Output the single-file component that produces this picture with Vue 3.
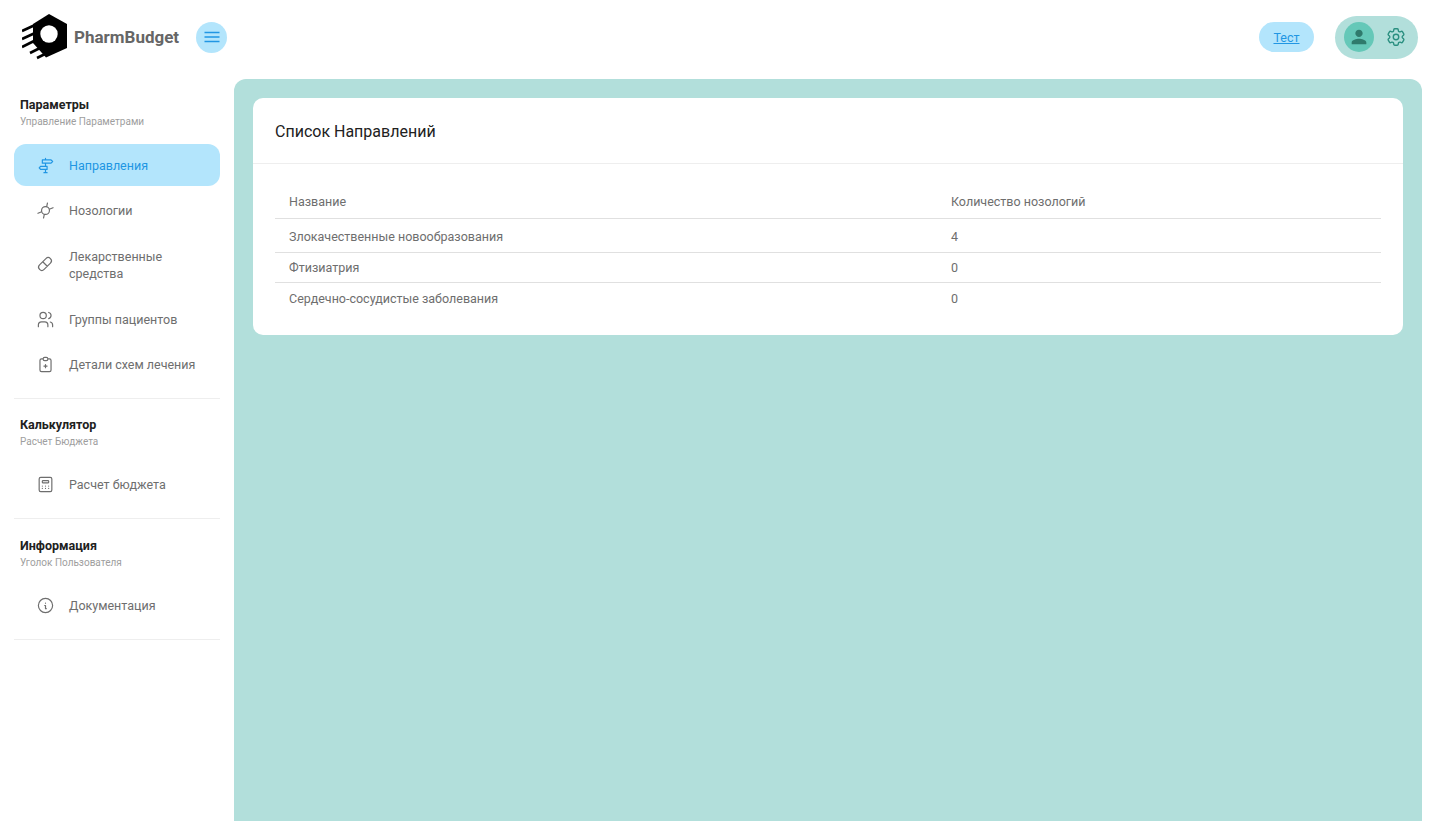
<script setup>
const groups = [
  {
    title: 'Параметры',
    sub: 'Управление Параметрами',
    items: [
      { label: 'Направления', icon: 'signpost', active: true },
      { label: 'Нозологии', icon: 'nosology' },
      { label: 'Лекарственные средства', icon: 'pill', wide: true },
      { label: 'Группы пациентов', icon: 'users' },
      { label: 'Детали схем лечения', icon: 'clipboard' }
    ]
  },
  {
    title: 'Калькулятор',
    sub: 'Расчет Бюджета',
    items: [{ label: 'Расчет бюджета', icon: 'calculator' }]
  },
  {
    title: 'Информация',
    sub: 'Уголок Пользователя',
    items: [{ label: 'Документация', icon: 'info' }]
  }
]

const icons = {
  signpost: 'M12 21v-4M12 13v-4M12 5V3M10 21h4M8 5v4h11l2-2-2-2zM14 13v4H6l-2-2 2-2z',
  nosology: 'M12 7a5 5 0 1 0 0 10a5 5 0 0 0 0-10zM13.5 7.2L14.5 2.5M16.8 10.5L21.5 8.5M10.5 16.8L9.5 21.5M7.2 13.5L2.5 15.5',
  pill: 'M4.5 12.5l8-8a4.066 4.066 0 0 1 5.75 5.75l-8 8a4.066 4.066 0 0 1-5.75-5.75M8.5 8.5l5.75 5.75',
  users: 'M5 7a4 4 0 1 0 8 0a4 4 0 1 0-8 0M3 21v-2a4 4 0 0 1 4-4h4a4 4 0 0 1 4 4v2M16 3.13a4 4 0 0 1 0 7.75M21 21v-2a4 4 0 0 0-3-3.85',
  clipboard: 'M9 5H7a2 2 0 0 0-2 2v12a2 2 0 0 0 2 2h10a2 2 0 0 0 2-2V7a2 2 0 0 0-2-2h-2M9 5a2 2 0 0 1 2-2h2a2 2 0 0 1 2 2a2 2 0 0 1-2 2h-2a2 2 0 0 1-2-2zM10 14h4M12 12v4',
  calculator: 'M6 3h12a2 2 0 0 1 2 2v14a2 2 0 0 1-2 2H6a2 2 0 0 1-2-2V5a2 2 0 0 1 2-2zM9 7h6a1 1 0 0 1 1 1v1a1 1 0 0 1-1 1H9a1 1 0 0 1-1-1V8a1 1 0 0 1 1-1zM8 14v.01M12 14v.01M16 14v.01M8 17v.01M12 17v.01M16 17v.01',
  info: 'M3 12a9 9 0 1 0 18 0a9 9 0 0 0-18 0M12 9h.01M11 12h1v4h1'
}

const rows = [
  { name: 'Злокачественные новообразования', count: 4 },
  { name: 'Фтизиатрия', count: 0 },
  { name: 'Сердечно-сосудистые заболевания', count: 0 }
]
</script>

<template>
  <div class="page">
    <header class="topbar">
      <div class="brand">
        <svg class="logo" width="46" height="46" viewBox="22 14 46 46">
          <polygon points="49,14 67,24 67,48 46,57.5 33,43 33,24" fill="#000" />
          <circle cx="49" cy="34" r="8.7" fill="#fff" />
          <g stroke="#000" stroke-width="2.6" fill="none">
            <path d="M22 31l13-6" />
            <path d="M22 39l13-6" />
            <path d="M22 47l15-7.5" />
            <path d="M30 53l14-7" />
            <path d="M37 58l13-6.5" />
          </g>
        </svg>
        <span class="brand-name">PharmBudget</span>
        <button class="burger">
          <svg width="16" height="12" viewBox="0 0 16 12" fill="none" stroke="#2196e3" stroke-width="1.3">
            <path d="M0.5 1.5h15M0.5 6h15M0.5 10.5h15" />
          </svg>
        </button>
      </div>
      <div class="actions">
        <a class="test-chip">Тест</a>
        <div class="user-pill">
          <span class="avatar">
            <svg width="22" height="22" viewBox="0 0 24 24" fill="#2f7a6c">
              <path d="M12 12c2.21 0 4-1.79 4-4s-1.79-4-4-4-4 1.79-4 4 1.79 4 4 4zm0 2c-2.67 0-8 1.34-8 4v2h16v-2c0-2.66-5.33-4-8-4z" />
            </svg>
          </span>
          <svg class="gear" width="22" height="22" viewBox="0 0 24 24" fill="none" stroke="#2a8f80" stroke-width="1.5">
            <path d="M9.594 3.94c.09-.542.56-.94 1.11-.94h2.593c.55 0 1.02.398 1.11.94l.213 1.281c.063.374.313.686.645.87.074.04.147.083.22.127.325.196.72.257 1.075.124l1.217-.456a1.125 1.125 0 011.37.49l1.296 2.247a1.125 1.125 0 01-.26 1.431l-1.003.827c-.293.241-.438.613-.43.992a7.723 7.723 0 010 .255c-.008.378.137.75.43.991l1.004.827c.424.35.534.955.26 1.43l-1.298 2.247a1.125 1.125 0 01-1.369.491l-1.217-.456c-.355-.133-.75-.072-1.076.124a6.47 6.47 0 01-.22.128c-.331.183-.581.495-.644.869l-.213 1.281c-.09.543-.56.94-1.11.94h-2.594c-.55 0-1.019-.398-1.11-.94l-.213-1.281c-.062-.374-.312-.686-.644-.87a6.52 6.52 0 01-.22-.127c-.325-.196-.72-.257-1.076-.124l-1.217.456a1.125 1.125 0 01-1.369-.49l-1.297-2.247a1.125 1.125 0 01.26-1.431l1.004-.827c.292-.24.437-.613.43-.991a6.932 6.932 0 010-.255c.007-.38-.138-.751-.43-.992l-1.004-.827a1.125 1.125 0 01-.26-1.43l1.297-2.247a1.125 1.125 0 011.37-.491l1.216.456c.356.133.751.072 1.076-.124.072-.044.146-.086.22-.128.332-.183.582-.495.644-.869l.214-1.28z" />
            <path d="M15 12a3 3 0 11-6 0 3 3 0 016 0z" />
          </svg>
        </div>
      </div>
    </header>

    <div class="body">
      <aside class="sidebar">
        <section v-for="group in groups" :key="group.title" class="group">
          <div class="group-head">
            <div class="group-title">{{ group.title }}</div>
            <div class="group-sub">{{ group.sub }}</div>
          </div>
          <a
            v-for="item in group.items"
            :key="item.label"
            class="nav-item"
            :class="{ active: item.active, wide: item.wide }"
          >
            <svg class="nav-icon" width="19" height="19" viewBox="0 0 24 24" fill="none" stroke="currentColor" stroke-width="1.5" stroke-linecap="round" stroke-linejoin="round">
              <path :d="icons[item.icon]" />
            </svg>
            <span class="nav-label">{{ item.label }}</span>
          </a>
        </section>
      </aside>

      <main class="content">
        <div class="card">
          <div class="card-head">Список Направлений</div>
          <div class="card-body">
            <table class="table">
              <thead>
                <tr>
                  <th class="col-name">Название</th>
                  <th>Количество нозологий</th>
                </tr>
              </thead>
              <tbody>
                <tr v-for="row in rows" :key="row.name">
                  <td>{{ row.name }}</td>
                  <td>{{ row.count }}</td>
                </tr>
              </tbody>
            </table>
          </div>
        </div>
      </main>
    </div>
  </div>
</template>

<style>
html,
body {
  margin: 0;
  height: 100%;
  overflow: hidden;
  background: #fff;
}
</style>

<style scoped>
.page {
  height: 821px;
  display: flex;
  flex-direction: column;
  font-family: Roboto, "Liberation Sans", sans-serif;
  font-size: 12.5px;
  color: #6e6e6e;
  overflow: hidden;
}

.topbar {
  height: 79px;
  flex-shrink: 0;
  display: flex;
  align-items: center;
  justify-content: space-between;
  padding: 0 22px 5px;
  box-sizing: border-box;
}

.brand {
  display: flex;
  align-items: center;
}

.logo {
  display: block;
}

.brand-name {
  margin-left: 6px;
  font-size: 17px;
  font-weight: 700;
  color: #666666;
}

.burger {
  margin-left: 17px;
  width: 31px;
  height: 31px;
  padding: 0;
  border: none;
  border-radius: 50%;
  background: #b3e5fc;
  display: flex;
  align-items: center;
  justify-content: center;
}

.actions {
  display: flex;
  align-items: center;
}

.test-chip {
  width: 55px;
  height: 30px;
  margin-right: 21px;
  border-radius: 15px;
  background: #b3e5fc;
  color: #2196e3;
  text-decoration: underline;
  display: flex;
  align-items: center;
  justify-content: center;
}

.user-pill {
  width: 83px;
  height: 43px;
  border-radius: 22px;
  background: #b2dfdb;
  display: flex;
  align-items: center;
  box-sizing: border-box;
  padding-left: 9px;
}

.avatar {
  width: 30px;
  height: 30px;
  border-radius: 50%;
  background: #65c8b8;
  display: flex;
  align-items: center;
  justify-content: center;
}

.gear {
  margin-left: 11px;
}

.body {
  flex: 1;
  display: flex;
  min-height: 0;
}

.sidebar {
  width: 234px;
  flex-shrink: 0;
  box-sizing: border-box;
  padding: 0 14px;
}

.group {
  padding-top: 17px;
  padding-bottom: 9px;
  border-bottom: 1px solid #eeeeee;
}

.group:last-child {
  padding-top: 17.5px;
}

.group-head {
  padding-left: 6px;
  margin-bottom: 13.5px;
}

.group:first-child .group-head,
.group:last-child .group-head {
  margin-bottom: 14px;
}

.group-title {
  font-size: 12.5px;
  line-height: 18px;
  font-weight: 700;
  color: #212121;
}

.group-sub {
  font-size: 10px;
  line-height: 16px;
  color: #9e9e9e;
}

.nav-item {
  display: flex;
  align-items: center;
  min-height: 42px;
  margin-bottom: 3.5px;
  padding-left: 22px;
  box-sizing: border-box;
  border-radius: 12px;
  color: #6e6e6e;
}

.nav-item.wide {
  align-items: flex-start;
  padding-top: 12.5px;
  padding-bottom: 13px;
}

.nav-item.wide .nav-icon {
  margin-top: 7px;
}

.nav-item.active {
  background: #b3e5fc;
  color: #2196e3;
}

.nav-icon {
  flex-shrink: 0;
}

.nav-label {
  margin-left: 14px;
  line-height: 17px;
  max-width: 110px;
}

.nav-item:not(.wide) .nav-label {
  max-width: none;
}

.content {
  width: 1188px;
  flex-shrink: 0;
  padding: 19px;
  box-sizing: border-box;
  background: #b2dfdb;
  border-radius: 12px 12px 0 0;
}

.card {
  background: #fff;
  border-radius: 10px;
}

.card-head {
  height: 66px;
  padding: 1px 22px 0;
  display: flex;
  align-items: center;
  box-sizing: border-box;
  border-bottom: 1px solid #eeeeee;
  font-size: 16px;
  color: #212121;
}

.card-body {
  padding: 21px 22px 22px;
}

.table {
  width: 100%;
  border-collapse: collapse;
}

.table th {
  height: 33px;
  padding: 0 14px;
  text-align: left;
  font-weight: 400;
  border-bottom: 1px solid #e0e0e0;
}

.table td {
  height: 29px;
  padding: 0 14px;
  border-bottom: 1px solid #e0e0e0;
}

.table tbody tr:first-child td {
  height: 34px;
  padding-top: 1px;
  box-sizing: border-box;
}

.table tbody tr:last-child td {
  padding-top: 1px;
  border-bottom: none;
}

.col-name {
  width: 662px;
  box-sizing: border-box;
}
</style>
